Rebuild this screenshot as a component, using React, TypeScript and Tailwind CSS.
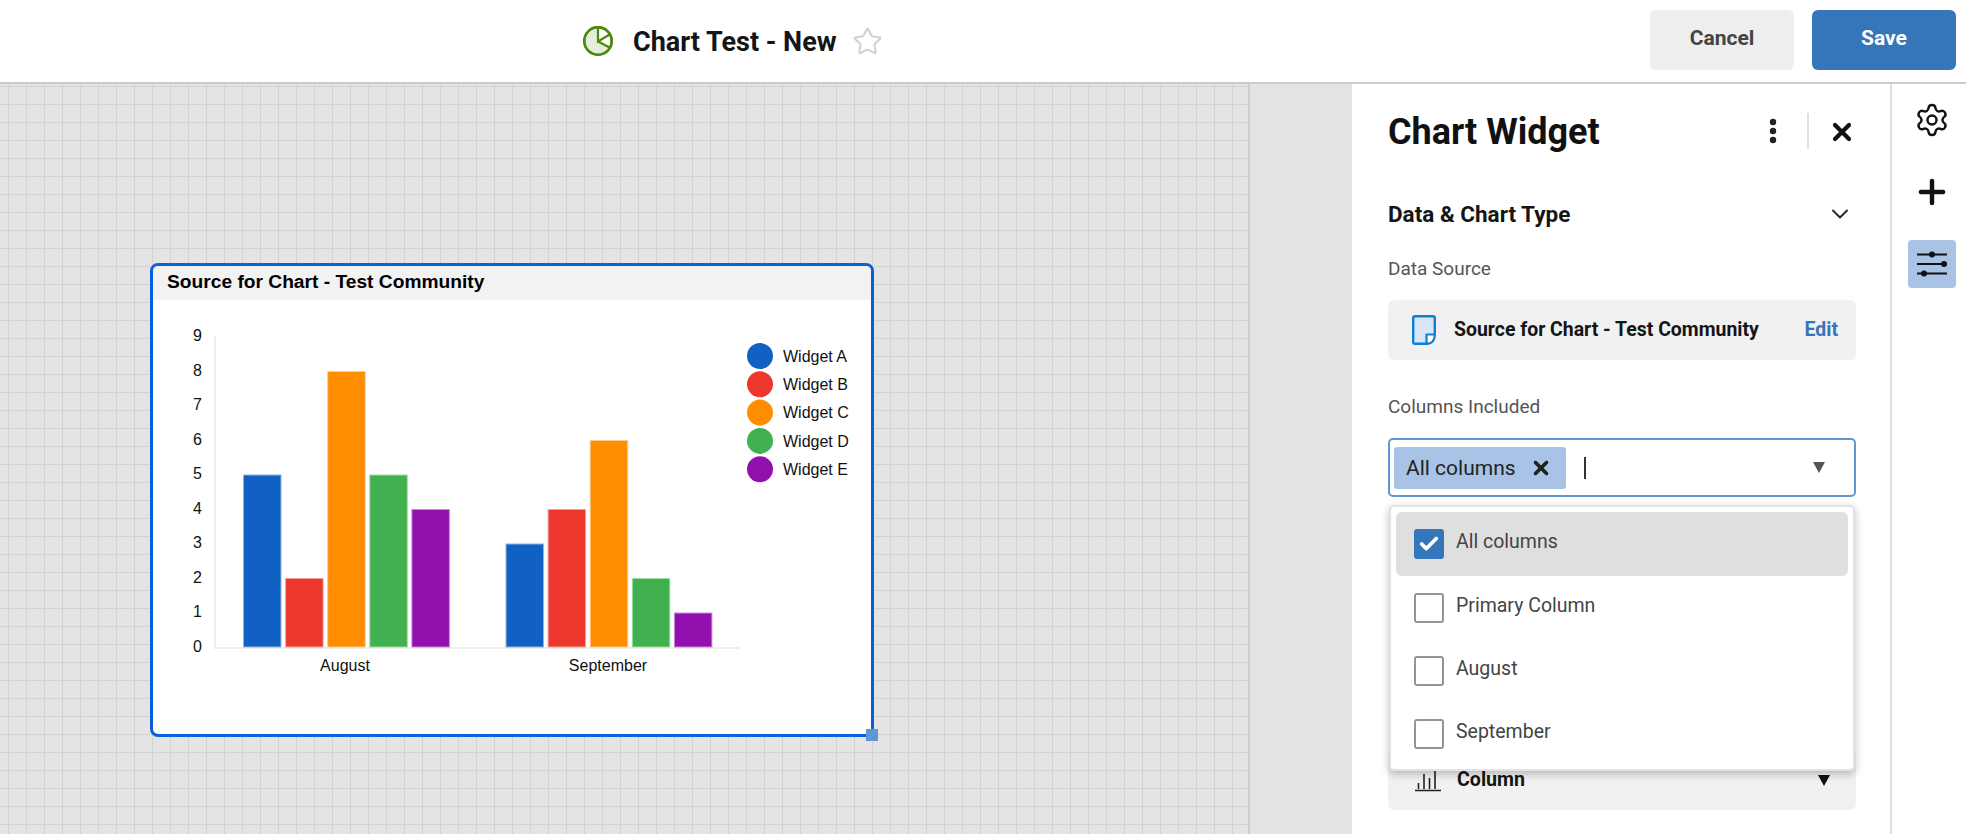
import { Settings, Plus, Star, X, ChevronDown, Check } from "lucide-react";

const bars = [
  { x: 243, vals: [5, 2, 8, 5, 4] },
  { x: 505.5, vals: [3, 4, 6, 2, 1] },
];
const colors = ["#1061c3", "#ed372d", "#ff8d00", "#40b14e", "#9210ad"];
const strokes = ["#8fb4e2", "#f6a19b", "#ffc98a", "#a3dbaa", "#c98ad8"];
const legend = ["Widget A", "Widget B", "Widget C", "Widget D", "Widget E"];
const UNIT = 34.5;
const BASE = 647;

function Chart() {
  return (
    <svg width="719" height="434" viewBox="153 300 719 434" className="block" style={{ fontFamily: '"Liberation Sans", Arial, sans-serif' }}>
      <line x1="215" y1="336" x2="215" y2="648" stroke="#eeeeee" strokeWidth="2" />
      <line x1="214" y1="648" x2="740" y2="648" stroke="#eeeeee" strokeWidth="2" />
      {[9, 8, 7, 6, 5, 4, 3, 2, 1, 0].map((n) => (
        <text key={n} x="202" y={BASE - n * UNIT + 4.6} textAnchor="end" fontSize="16" fill="#111">
          {n}
        </text>
      ))}
      {bars.map((g) =>
        g.vals.map((v, i) => (
          <rect
            key={`${g.x}-${i}`}
            x={g.x + i * 42.1 + 0.5}
            y={BASE - v * UNIT + 0.5}
            width="37.5"
            height={v * UNIT - 0.5}
            fill={colors[i]}
            stroke={strokes[i]}
            strokeWidth="1"
          />
        ))
      )}
      <text x="345" y="671" textAnchor="middle" fontSize="16" fill="#111">August</text>
      <text x="608" y="671" textAnchor="middle" fontSize="16" fill="#111">September</text>
      {legend.map((l, i) => (
        <g key={l}>
          <circle cx="760" cy={356 + i * 28.3} r="13" fill={colors[i]} />
          <text x="783" y={361.6 + i * 28.3} fontSize="16" fill="#111">{l}</text>
        </g>
      ))}
    </svg>
  );
}

function Row({ label, checked, className }: { label: string; checked?: boolean; className: string }) {
  return (
    <div className={`flex items-center pl-[18px] rounded-md ${className}`}>
      {checked ? (
        <span className="w-[30px] h-[30px] rounded-[3px] bg-[#3575ba] flex items-center justify-center">
          <Check size={22} strokeWidth={4} color="#fff" />
        </span>
      ) : (
        <span className="w-[30px] h-[30px] rounded-[3px] border-2 border-[#949494] bg-white" />
      )}
      <span className="ml-3 text-[19.5px] text-[#444444] -mt-[4px]">{label}</span>
    </div>
  );
}

export default function App() {
  return (
    <div className="w-screen h-screen overflow-hidden flex flex-col bg-white font-['Roboto',sans-serif]">
      <header className="h-[84px] shrink-0 border-b-2 border-[#cccccc] flex items-start">
        <div className="ml-[583px] h-[82px] flex items-center">
          <svg width="30" height="30" viewBox="0 0 30 30">
            <circle cx="15" cy="15" r="13.7" fill="#fff" stroke="#4a8a0c" strokeWidth="2.4" />
            <path d="M15 15.5 V2 A13 13 0 1 0 27.2 21.5 Z" fill="#e3eedb" />
            <circle cx="15" cy="15" r="13.7" fill="none" stroke="#4a8a0c" strokeWidth="2.4" />
            <path d="M15 1.5 V15.5 L27.4 8 M15 15.5 L27.6 22" fill="none" stroke="#4a8a0c" strokeWidth="2.2" />
          </svg>
          <span className="ml-[20px] mt-[2px] text-[27px] font-bold text-[#151515] leading-none">Chart Test - New</span>
          <Star size={31} strokeWidth={1.6} color="#d2d2d2" className="ml-[15px]" />
        </div>
        <div className="ml-auto mr-[10px] mt-[10px] flex gap-[18px]">
          <button className="w-[144px] h-[60px] rounded-md bg-[#eeeeee] text-[21px] font-bold text-[#444444] pb-[2px]">Cancel</button>
          <button className="w-[144px] h-[60px] rounded-md bg-[#3575ba] text-[21px] font-bold text-white pb-[2px]">Save</button>
        </div>
      </header>

      <main className="flex-1 flex min-h-0">
        <div className="w-[1351px] shrink-0 relative bg-[#e4e4e4]">
          <div className="absolute inset-y-0 left-0 w-[1250px] border-r-2 border-[#cdcdcd] bg-[linear-gradient(to_right,#d2d2d2_1px,transparent_1px),linear-gradient(to_bottom,#d2d2d2_1px,transparent_1px)] bg-[size:18px_18px] bg-[position:8px_2px]">
            <div className="absolute left-[150px] top-[179px] w-[724px] h-[474px] border-[3px] border-[#0a5fdc] rounded-[8px] bg-white">
              <div className="h-[34px] rounded-t-[5px] bg-[#f2f2f2] pl-[14px] pb-[1px] flex items-center font-['Liberation_Sans',sans-serif] font-bold text-[19.2px] text-black">
                Source for Chart - Test Community
              </div>
              <Chart />
              <div className="absolute -right-[7px] -bottom-[7px] w-[12px] h-[12px] bg-[#6096d4]" />
            </div>
          </div>
        </div>

        <aside className="w-[541px] shrink-0 border-l border-r-2 border-l-[#e2e2e2] border-r-[#dddddd] pl-[36px] pr-[34px] pt-[29px]">
          <div className="h-[36px] flex items-center">
            <h1 className="text-[36px] font-bold text-[#111111] leading-none mt-[2px]">Chart Widget</h1>
            <svg width="8" height="26" viewBox="0 0 8 26" className="ml-auto mr-[30px]" fill="#222">
              <circle cx="4" cy="4" r="3.2" />
              <circle cx="4" cy="13" r="3.2" />
              <circle cx="4" cy="22" r="3.2" />
            </svg>
            <span className="w-[2px] h-[36px] bg-[#e0e0e0]" />
            <X size={28} strokeWidth={3.6} color="#111" className="ml-[19px] mt-[2px]" />
          </div>

          <div className="mt-[51px] h-[28px] flex items-center justify-between">
            <span className="text-[22.5px] font-bold text-[#151515] mt-[2px]">Data &amp; Chart Type</span>
            <ChevronDown size={28} strokeWidth={1.6} color="#222" className="mr-[2px]" />
          </div>

          <div className="mt-[29px] h-[24px] flex items-center text-[19px] text-[#555555]">Data Source</div>

          <div className="mt-[19px] h-[60px] rounded-md bg-[#f1f1f1] flex items-center pl-[24px] pr-[18px]">
            <svg width="24" height="30" viewBox="0 0 24 30">
              <path d="M3 1.2 H21 a1.8 1.8 0 0 1 1.8 1.8 V20 L15 28.8 H3 a1.8 1.8 0 0 1 -1.8 -1.8 V3 a1.8 1.8 0 0 1 1.8 -1.8Z" fill="#d8e6f8" stroke="#0f7fd0" strokeWidth="2.4" />
              <path d="M22.8 19.5 H14.5 V28.8 Q22.8 28.8 22.8 19.5Z" fill="#fff" stroke="#0f7fd0" strokeWidth="2.2" strokeLinejoin="round" />
            </svg>
            <span className="ml-[18px] text-[19.45px] font-bold text-[#151515]">Source for Chart - Test Community</span>
            <span className="ml-auto text-[19.45px] font-bold text-[#3575ba]">Edit</span>
          </div>

          <div className="mt-[35px] h-[24px] flex items-center text-[19px] text-[#555555]">Columns Included</div>

          <div className="relative mt-[19px]">
            <div className="h-[59px] rounded-[5px] border-2 border-[#6096d4] bg-white flex items-center pl-[4px]">
              <span className="w-[172px] h-[42px] rounded-[3px] bg-[#a8c3e5] flex items-center pl-[12px] text-[21px] text-[#222222]">
                <span className="mt-[2px]">All columns</span>
                <X size={22} strokeWidth={4} color="#222" className="ml-[14px]" />
              </span>
              <span className="ml-[18px] w-[2px] h-[22px] bg-[#333333]" />
              <span className="ml-auto mr-[29px] w-0 h-0 border-x-[6px] border-x-transparent border-t-[11px] border-t-[#555555]" />
            </div>

            <div className="absolute left-[1px] right-[1px] top-[67px] h-[266px] rounded-[5px] border-2 border-[#e2e2e2] bg-white p-[5px] shadow-[0_3px_8px_rgba(0,0,0,0.25)] z-10">
              <Row label="All columns" checked className="h-[64px] bg-[#dfdfdf]" />
              <Row label="Primary Column" className="h-[64px]" />
              <Row label="August" className="h-[62px]" />
              <Row label="September" className="h-[64px]" />
            </div>
          </div>

          <div className="mt-[253px] h-[60px] rounded-md bg-[#f1f1f1] flex items-end pb-[18px] pl-[27px] pr-[26px]">
            <svg width="26" height="24" viewBox="0 0 26 24" fill="none" stroke="#222" strokeWidth="1.6">
              <path d="M0 22.5 H26 M3.5 21 V15 M9 21 V6 M14.5 21 V10 M20 21 V1" />
            </svg>
            <span className="ml-[16px] text-[19.6px] font-bold text-[#151515] leading-[24px]">Column</span>
            <span className="ml-auto mb-[6px] w-0 h-0 border-x-[6px] border-x-transparent border-t-[11px] border-t-[#111111]" />
          </div>
        </aside>

        <nav className="flex-1 flex flex-col items-center pt-[18px] pl-[6px]">
          <Settings size={36} strokeWidth={1.6} color="#111" />
          <Plus size={38} strokeWidth={2.8} color="#111" className="mt-[35px]" />
          <div className="mt-[29px] w-[48px] h-[48px] rounded-[4px] bg-[#a9c3e4] flex items-center justify-center">
            <svg width="32" height="26" viewBox="0 0 32 26" stroke="#111" strokeWidth="1.8" fill="#111">
              <path d="M1 3.5 H31 M1 13 H31 M1 22.5 H31" />
              <circle cx="16" cy="3.5" r="3" stroke="none" />
              <circle cx="28" cy="13" r="3" stroke="none" />
              <circle cx="8" cy="22.5" r="3" stroke="none" />
            </svg>
          </div>
        </nav>
      </main>
    </div>
  );
}
